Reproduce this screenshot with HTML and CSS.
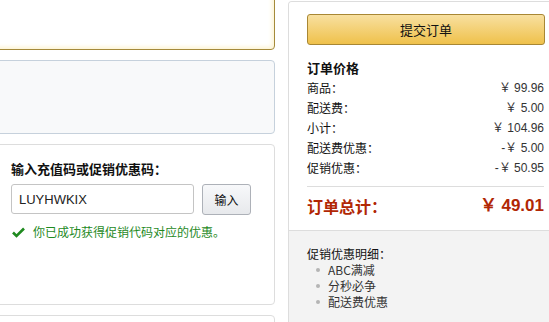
FILE: index.html
```html
<!DOCTYPE html>
<html lang="zh-CN">
<head>
    <meta charset="UTF-8">
    <title>订单</title>
    <link rel="stylesheet" href="styles.css">
</head>
<body>
<div class="g-page">
    <div class="g-left">
        <div class="m-box m-box-notice"></div>
        <div class="m-box m-box-info"></div>
        <div class="m-box m-box-promo">
            <h4 class="u-title">输入充值码或促销优惠码：</h4>
            <div class="m-code">
                <input type="text" class="u-input" value="LUYHWKIX"/>
                <button class="u-btn">输入</button>
            </div>
            <p class="u-success">
                <svg class="u-check" width="13" height="11" viewBox="0 0 13 11">
                    <path d="M1 5.5 L4.5 9 L12 1.5" fill="none" stroke="#1f8a1f" stroke-width="2.6"/>
                </svg>
                你已成功获得促销代码对应的优惠。
            </p>
        </div>
        <div class="m-box m-box-last"></div>
    </div>
    <div class="g-side">
        <div class="m-summary">
            <button class="u-submit">提交订单</button>
            <h4 class="u-head">订单价格</h4>
            <ul class="m-rows">
                <li><span>商品：</span><span class="u-num">￥ 99.96</span></li>
                <li><span>配送费：</span><span class="u-num">￥ 5.00</span></li>
                <li><span>小计：</span><span class="u-num">￥ 104.96</span></li>
                <li><span>配送费优惠：</span><span class="u-num">-￥ 5.00</span></li>
                <li><span>促销优惠：</span><span class="u-num">-￥ 50.95</span></li>
            </ul>
            <div class="m-total">
                <span class="u-total-label">订单总计：</span>
                <span class="u-total">￥ 49.01</span>
            </div>
        </div>
        <div class="m-detail">
            <p>促销优惠明细：</p>
            <ul>
                <li>ABC满减</li>
                <li>分秒必争</li>
                <li>配送费优惠</li>
            </ul>
        </div>
    </div>
</div>
</body>
</html>
```

FILE: styles.css
```css
* {
    padding: 0;
    margin: 0;
}
body {
    font-family: "Noto Sans CJK SC", "Liberation Sans", sans-serif;
    font-size: 12px;
    color: #111;
    background: #fff;
    height: 322px;
    overflow: hidden;
}
ul {
    list-style: none;
}
.g-page {
    display: flex;
    align-items: flex-start;
}
.g-left {
    width: 285px;
    margin-left: -10px;
    flex-shrink: 0;
}
.m-box {
    border: 1px solid #ddd;
    border-radius: 4px;
    margin-bottom: 10px;
    padding: 0 20px;
    box-sizing: border-box;
}
.m-box-notice {
    margin-top: -18px;
    height: 68px;
    border-color: #a58a3a;
    box-shadow: inset 0 0 4px 2px #fdf3d2;
}
.m-box-info {
    height: 74px;
    border-color: #c6d1dc;
    background: #f8f9fa;
}
.m-box-promo {
    height: 161px;
    padding-top: 16px;
}
.m-box-last {
    height: 20px;
    margin-bottom: 0;
}
.u-title {
    font-size: 13px;
    line-height: 16px;
    font-weight: bold;
    color: #111;
}
.m-code {
    display: flex;
    margin-top: 7px;
}
.u-input {
    width: 183px;
    height: 30px;
    box-sizing: border-box;
    border: 1px solid #c4c4c4;
    border-radius: 3px;
    padding: 0 7px;
    font-family: "Liberation Sans", sans-serif;
    font-size: 13px;
    color: #222;
    outline: none;
}
.u-btn {
    width: 49px;
    height: 31px;
    margin-left: 8px;
    border: 1px solid #adb1b8;
    border-radius: 3px;
    background: linear-gradient(#f7f8fa, #e7e9ec);
    font-family: "Noto Sans CJK SC", sans-serif;
    font-size: 12px;
    color: #111;
}
.u-success {
    margin-top: 9px;
    line-height: 16px;
    color: #1f8a1f;
    display: flex;
    align-items: center;
}
.u-check {
    margin: 0 8px 0 1px;
}
.g-side {
    margin-left: 13px;
    margin-top: 1px;
    width: 275px;
    flex-shrink: 0;
    border: 1px solid #ddd;
    border-bottom: none;
    border-radius: 4px 4px 0 0;
    height: 321px;
    box-sizing: border-box;
    overflow: hidden;
    background: #f3f3f3;
}
.m-summary {
    padding: 12px 18px 12px;
    border-bottom: 1px solid #ddd;
    background: #fff;
}
.u-submit {
    display: block;
    width: 238px;
    height: 31px;
    border: 1px solid #a88734;
    border-radius: 3px;
    background: linear-gradient(#f8e0a0, #efc14b);
    font-family: "Noto Sans CJK SC", sans-serif;
    font-size: 13px;
    color: #111;
}
.u-head {
    margin-top: 13px;
    font-size: 13px;
    line-height: 20px;
    font-weight: bold;
}
.m-rows li {
    display: flex;
    justify-content: space-between;
    line-height: 20px;
}
.u-num {
    font-family: "Liberation Sans", sans-serif;
    color: #333;
}
.m-total {
    margin-top: 8px;
    border-top: 1px solid #ddd;
    padding-top: 7px;
    display: flex;
    justify-content: space-between;
    line-height: 24px;
    font-size: 16px;
    color: #b12704;
}
.u-total-label {
    font-weight: bold;
}
.u-total {
    font-family: "Liberation Sans", sans-serif;
    font-weight: bold;
    font-size: 17px;
}
.m-detail {
    padding: 15px 18px 0;
}
.m-detail p {
    line-height: 16px;
}
.m-detail li {
    line-height: 16px;
    padding-left: 21px;
    position: relative;
    color: #333;
}
.m-detail li::before {
    content: "";
    position: absolute;
    left: 9px;
    top: 6px;
    width: 4px;
    height: 4px;
    border-radius: 2px;
    background: #b5b5b5;
}
```
